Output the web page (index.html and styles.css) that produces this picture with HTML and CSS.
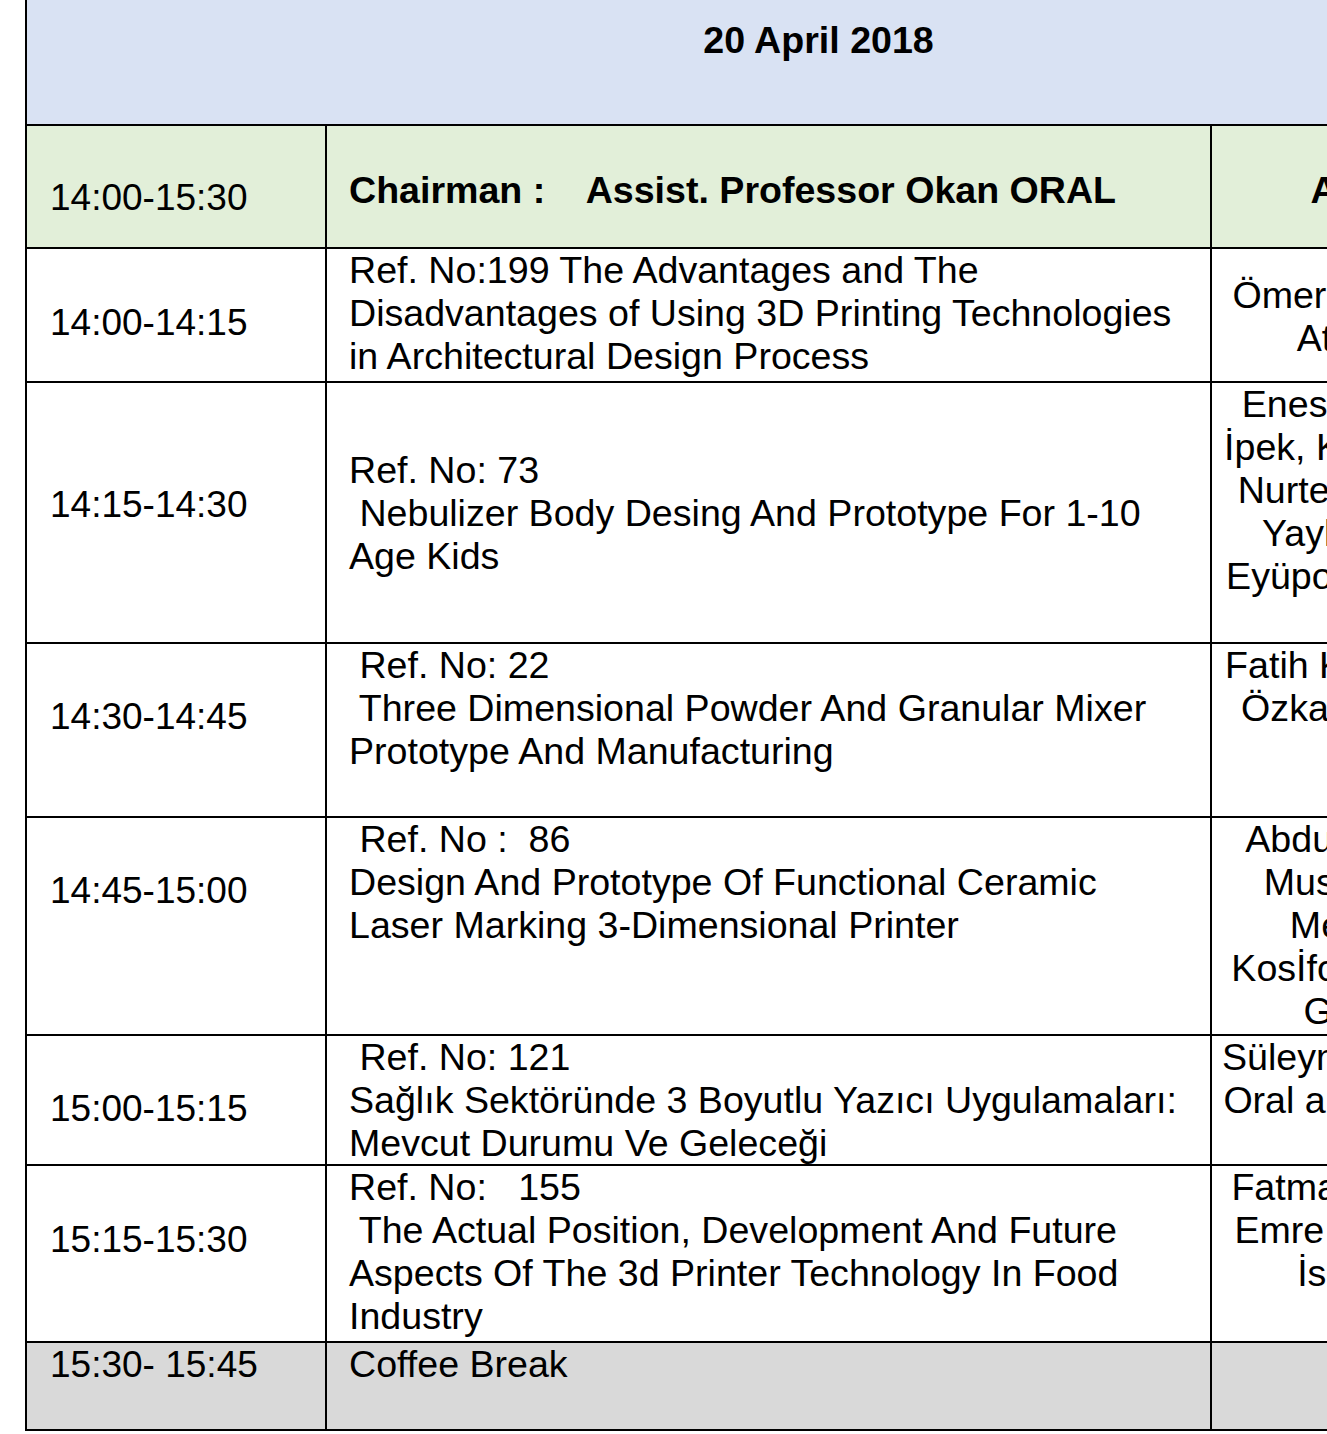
FILE: index.html
```html
<!DOCTYPE html>
<html lang="tr">
<head>
<meta charset="utf-8">
<title>20 April 2018 – Programme</title>
<link rel="stylesheet" href="styles.css">
</head>
<body>
<div class="page">
  <div class="schedule">
    <div class="cell day"><span class="ln">20 April 2018</span></div>

    <div class="cell session t pad-50"><span class="ln">14:00-15:30</span></div>
    <div class="cell session p pad-43 bold"><span class="ln">Chairman :    Assist. Professor Okan ORAL</span></div>
    <div class="cell session a pad-43 bold"><span class="ln">All Authors</span></div>

    <div class="cell t pad-52"><span class="ln">14:00-14:15</span></div>
    <div class="cell p"><span class="ln">Ref. No:199 The Advantages and The</span><span class="ln">Disadvantages of Using 3D Printing Technologies</span><span class="ln">in Architectural Design Process</span></div>
    <div class="cell a pad-25"><span class="ln">Ömer Faruk Kayaalp,</span><span class="ln">Atakan Yavuz</span></div>

    <div class="cell t pad-100"><span class="ln">14:15-14:30</span></div>
    <div class="cell p pad-66"><span class="ln">Ref. No: 73</span><span class="ln"> Nebulizer Body Desing And Prototype For 1-10</span><span class="ln">Age Kids</span></div>
    <div class="cell a"><span class="ln">Enes Erdoğan Kara,</span><span class="ln">İpek, Kerem Karaoğlu,</span><span class="ln">Nurten Akgün Demir,</span><span class="ln">Yaylagül, Mehmet</span><span class="ln">Eyüpoğlu, Sinan Kaya</span></div>

    <div class="cell t"><span class="ln">14:30-14:45</span></div>
    <div class="cell p"><span class="ln"> Ref. No: 22</span><span class="ln"> Three Dimensional Powder And Granular Mixer</span><span class="ln">Prototype And Manufacturing</span></div>
    <div class="cell a"><span class="ln">Fatih Kemal Karaoğlu,</span><span class="ln">Özkan, Ahmet Yıldız</span></div>

    <div class="cell t"><span class="ln">14:45-15:00</span></div>
    <div class="cell p"><span class="ln"> Ref. No :  86</span><span class="ln">Design And Prototype Of Functional Ceramic</span><span class="ln">Laser Marking 3-Dimensional Printer</span></div>
    <div class="cell a"><span class="ln">Abdullah Yılmaz, Ali</span><span class="ln">Mustafa Karacan,</span><span class="ln">Mehmet Şahin</span><span class="ln">Kosİfoğlu and Ali Kurt</span><span class="ln">Gökhan Kılıç</span></div>

    <div class="cell t"><span class="ln">15:00-15:15</span></div>
    <div class="cell p"><span class="ln"> Ref. No: 121</span><span class="ln">Sağlık Sektöründe 3 Boyutlu Yazıcı Uygulamaları:</span><span class="ln">Mevcut Durumu Ve Geleceği</span></div>
    <div class="cell a"><span class="ln">Süleyman Güler, Okan</span><span class="ln">Oral and Murat Yılmaz</span></div>

    <div class="cell t pad-52"><span class="ln">15:15-15:30</span></div>
    <div class="cell p"><span class="ln">Ref. No:   155</span><span class="ln"> The Actual Position, Development And Future</span><span class="ln">Aspects Of The 3d Printer Technology In Food</span><span class="ln">Industry</span></div>
    <div class="cell a"><span class="ln">Fatma Nur Karabulut,</span><span class="ln">Emre Karakoyun and</span><span class="ln">İsmail Karaca</span></div>

    <div class="cell break t pad-0"><span class="ln">15:30- 15:45</span></div>
    <div class="cell break p"><span class="ln">Coffee Break</span></div>
    <div class="cell break a"></div>
  </div>
</div>
</body>
</html>
```

FILE: styles.css
```css
html, body {
  margin: 0;
  padding: 0;
  background: #ffffff;
}

.page {
  width: 100%;
  height: 1434px;
  overflow: hidden;
}

.schedule {
  display: grid;
  grid-template-columns: 298px 883px 398px;
  grid-template-rows: 124px 121px 132px 259px 172px 216px 128px 175px 86px;
  gap: 2px;
  background: #000000;
  padding: 0 2px 2px 2px;
  margin-left: 25px;
  width: max-content;
  font-family: "Liberation Sans", Arial, sans-serif;
  font-size: 37.6px;
  line-height: 43px;
  color: #000000;
}

.cell {
  background: #ffffff;
  padding: 0;
  box-sizing: border-box;
  overflow: hidden;
}

.ln {
  display: block;
  white-space: pre;
}

.day {
  grid-column: 1 / -1;
  background: #d9e2f3;
  text-align: center;
  font-weight: bold;
  padding-top: 19px;
}

.session {
  background: #e2efd9;
}

.break {
  background: #d9d9d9;
}

.bold {
  font-weight: bold;
}

.t {
  padding-left: 23px;
  padding-top: 51px;
  font-size: 37px;
}

.p {
  padding-left: 22px;
}

.a {
  text-align: center;
}

.pad-0 { padding-top: 0; }
.pad-25 { padding-top: 25px; }
.pad-43 { padding-top: 43px; }
.pad-50 { padding-top: 50px; }
.pad-52 { padding-top: 52px; }
.pad-66 { padding-top: 66px; }
.pad-100 { padding-top: 100px; }
```
